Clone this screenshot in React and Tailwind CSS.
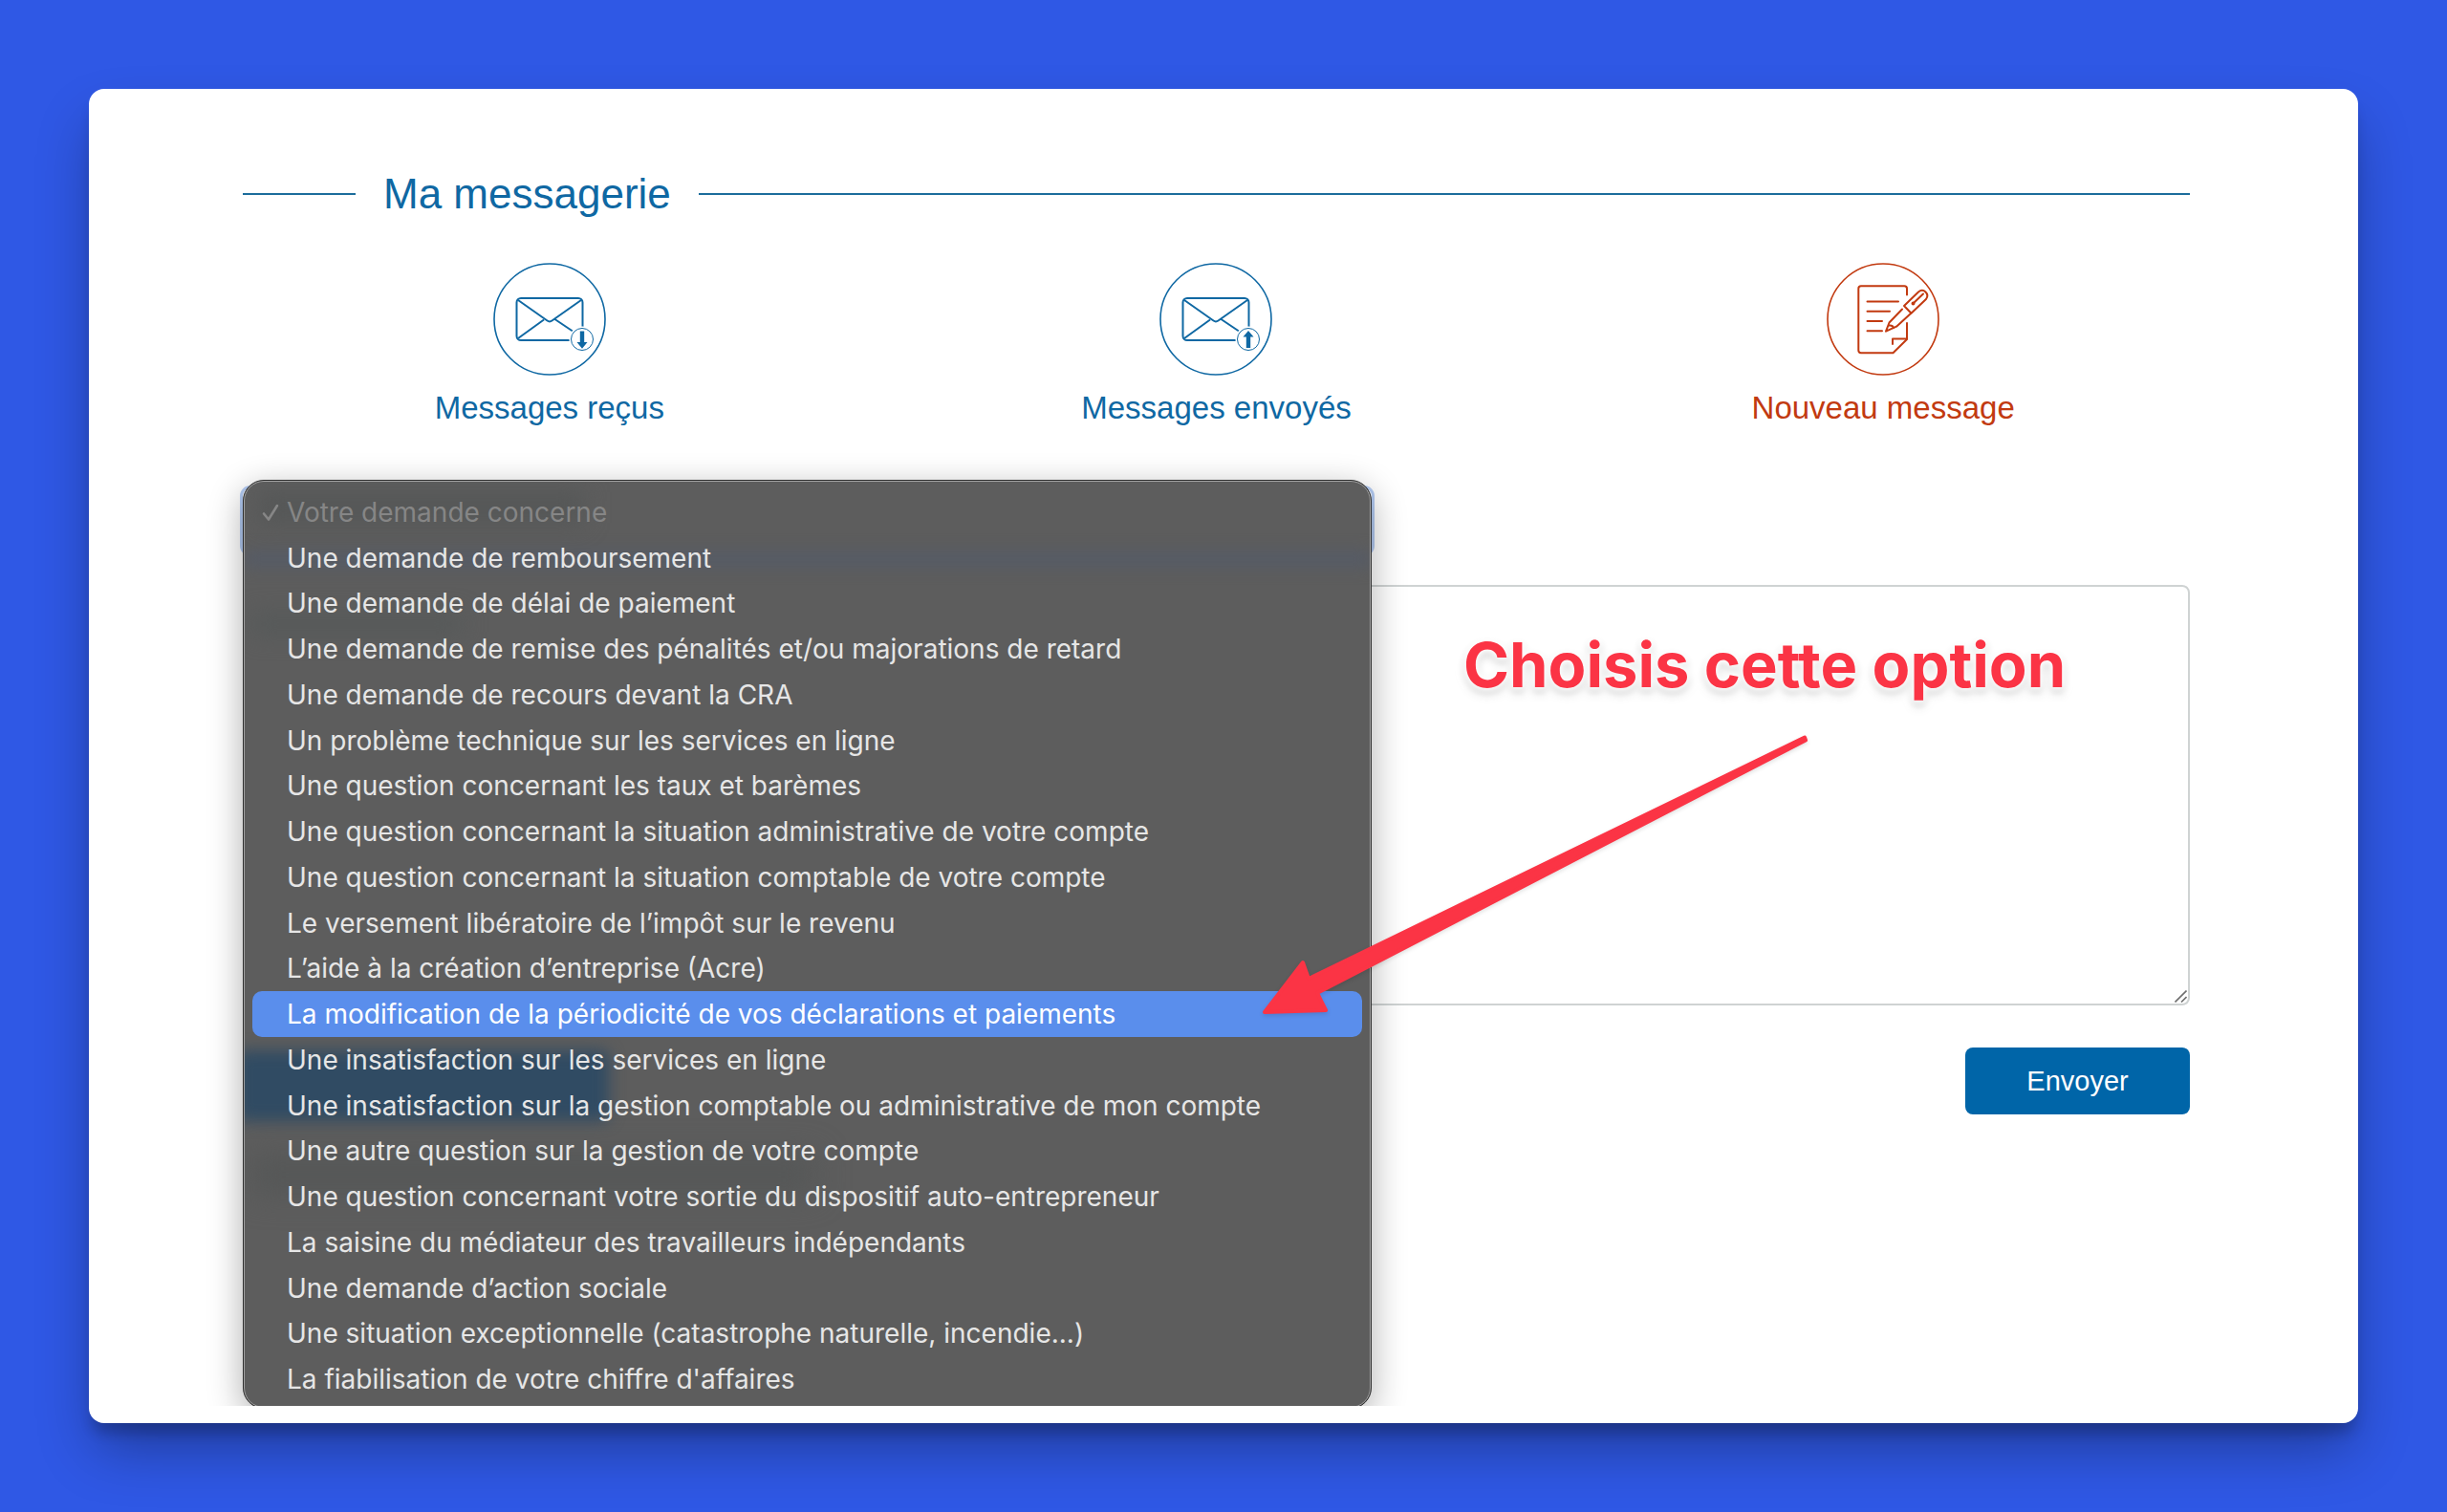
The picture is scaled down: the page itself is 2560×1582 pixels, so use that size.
const options = [
  "Votre demande concerne",
  "Une demande de remboursement",
  "Une demande de délai de paiement",
  "Une demande de remise des pénalités et/ou majorations de retard",
  "Une demande de recours devant la CRA",
  "Un problème technique sur les services en ligne",
  "Une question concernant les taux et barèmes",
  "Une question concernant la situation administrative de votre compte",
  "Une question concernant la situation comptable de votre compte",
  "Le versement libératoire de l’impôt sur le revenu",
  "L’aide à la création d’entreprise (Acre)",
  "La modification de la périodicité de vos déclarations et paiements",
  "Une insatisfaction sur les services en ligne",
  "Une insatisfaction sur la gestion comptable ou administrative de mon compte",
  "Une autre question sur la gestion de votre compte",
  "Une question concernant votre sortie du dispositif auto-entrepreneur",
  "La saisine du médiateur des travailleurs indépendants",
  "Une demande d’action sociale",
  "Une situation exceptionnelle (catastrophe naturelle, incendie...)",
  "La fiabilisation de votre chiffre d'affaires",
];

const HIGHLIGHTED = 11;

const EnvelopeIcon = ({ direction }) => (
  <svg className="w-[118px] h-[118px]" fill="none" stroke="currentColor" viewBox="0 0 118 118">
    <circle cx="59" cy="59" r="58" strokeWidth={1.6} />
    <rect x="24.5" y="37" width="69" height="44" rx="4.5" strokeWidth={2} />
    <path strokeWidth={2} d="M26 39L56.500 60.500q2.500 1.800 5 0L92 39M26 79l27-19.500M64.500 59L92 77.500" />
    <circle cx="93" cy="80" r="13.500" fill="white" stroke="none" />
    <circle cx="93" cy="80" r="11.500" strokeWidth={1} />
    {direction === "down" ? (
      <path fill="currentColor" stroke="none" d="M90.800 71.500h4.400V83h3.300L93 89.700 87.500 83h3.300z" />
    ) : (
      <path fill="currentColor" stroke="none" d="M90.800 89h4.400V77.500h3.300L93 71l-5.500 6.500h3.300z" />
    )}
  </svg>
);

const ComposeIcon = () => (
  <svg
    className="w-[118px] h-[118px]"
    fill="none"
    stroke="currentColor"
    strokeLinecap="round"
    strokeLinejoin="round"
    viewBox="0 0 118 118"
  >
    <circle cx="59" cy="59" r="58" strokeWidth={1.6} />
    <g strokeWidth={2}>
      <path d="M84 33.500V27q0-2.700-2.700-2.700H36q-2.700 0-2.700 2.700v64.600q0 2.700 2.700 2.700H69.500L84 80V63" />
      <path d="M69 85v-5.500h14.500" />
      <path d="M42.500 40.500h32.500M42.500 50.800h23.500M42.500 61h15.500M42.500 71.300h15.500" />
      <path d="M79 48.500L65.500 62.500 62 71.700l11-5L88 53" />
      <path d="M65.500 65.500q3.500-.5 4.500 2.500" />
      <path d="M81 45l15-14.500q4-3.500 7.500 0t.5 7.500L88.500 52.700z" />
      <path d="M90.500 42.500L101 32.500" />
      <circle cx="90.500" cy="42.500" r="1" />
    </g>
  </svg>
);

const tabs = [
  { label: "Messages reçus", icon: <EnvelopeIcon direction="down" />, color: "text-[#0f68a3]" },
  { label: "Messages envoyés", icon: <EnvelopeIcon direction="up" />, color: "text-[#0f68a3]" },
  { label: "Nouveau message", icon: <ComposeIcon />, color: "text-[#c23a10]" },
];

const SubjectMenu = () => (
  <div className="absolute left-0 -top-[9px] z-10 w-full overflow-hidden rounded-[22px] border border-[#2e2e2e] bg-[#5d5d5d] px-[9px] pt-[9px] pb-[6px] shadow-[0_10px_36px_rgba(0,0,0,0.32)]">
    {/* Page colours showing through the translucent menu */}
    <div className="absolute left-4 top-3 h-8 w-[340px] bg-[#555757] blur-md" />
    <div className="absolute left-0 top-[74px] h-4 w-full bg-[#555b67] blur-sm" />
    <div className="absolute left-2 top-[140px] h-5 w-[220px] bg-[#555959] blur-md" />
    <div className="absolute -left-2 top-[596px] h-[74px] w-[390px] rounded-lg bg-[#304b63] blur-sm" />
    <div className="absolute left-2 top-[706px] h-10 w-[590px] bg-[#555757] blur-lg" />
    <div className="absolute inset-0 rounded-[21px] border border-[#a3a3a3]" />

    <ul role="listbox" aria-label="Votre demande concerne" className="relative flex h-[955px] flex-col">
      {options.map((option, index) => (
        <li
          key={option}
          role="option"
          aria-selected={index === 0}
          className={`relative flex flex-1 items-center rounded-[10px] pl-9 font-[Inter,sans-serif] text-[28px] leading-none whitespace-nowrap ${
            index === HIGHLIGHTED
              ? "bg-[#5a8eec] text-white"
              : index === 0
                ? "text-[#868686]"
                : "text-[#e6e6e6]"
          }`}
        >
          {index === 0 && (
            <svg
              className="absolute left-2 h-6 w-6"
              fill="none"
              stroke="currentColor"
              strokeWidth={2.6}
              strokeLinecap="round"
              strokeLinejoin="round"
              viewBox="0 0 24 24"
            >
              <path d="M4 13.500l5 6L18 5" />
            </svg>
          )}
          {option}
        </li>
      ))}
    </ul>
  </div>
);

const App = () => {
  return (
    <div className="flex min-h-screen bg-[#2f58e5] p-[93px] font-['Liberation_Sans',Arial,sans-serif]">
      <main className="flex flex-1 flex-col rounded-2xl bg-white pb-[18px] shadow-[0_32px_60px_-6px_rgba(0,0,0,0.32),0_14px_14px_-4px_rgba(0,0,0,0.2)]">
        <div className="flex-1 overflow-hidden pt-[85px] pl-[161px] pr-[176px]">
          {/* Title */}
          <div className="flex items-center gap-[29px]">
            <div className="h-[2px] w-[118px] bg-[#1c6d9c]" />
            <h1 className="text-[44px] leading-[50px] text-[#0f68a3]">Ma messagerie</h1>
            <div className="h-[2px] flex-1 bg-[#1c6d9c]" />
          </div>

          {/* Mailbox tabs */}
          <nav className="-mx-7 mt-[47px] grid grid-cols-3">
            {tabs.map((tab) => (
              <a
                key={tab.label}
                href="#"
                className={`flex flex-col items-center gap-[14px] text-[33px] leading-10 ${tab.color}`}
              >
                {tab.icon}
                {tab.label}
              </a>
            ))}
          </nav>

          {/* New message form */}
          <form className="mt-16">
            <div className="relative w-[58%]">
              <select
                aria-label="Votre demande concerne"
                className="block h-[68px] w-full appearance-none rounded-lg bg-white px-6 text-[29px] text-white outline-3 outline-[#b3cbf3]"
              >
                {options.map((option) => (
                  <option key={option}>{option}</option>
                ))}
              </select>
              <SubjectMenu />
            </div>

            <div className="relative mt-[33px]">
              <textarea
                aria-label="Votre message"
                className="block h-[440px] w-full resize-none rounded-lg border-2 border-[#cfd3d3] bg-white p-6 text-[29px]"
              />
              <svg
                className="absolute right-[3px] bottom-[3px] h-[13px] w-[13px]"
                stroke="#6f6f6f"
                strokeWidth={1.6}
                viewBox="0 0 13 13"
              >
                <path d="M.5 12.500l12-12M7 12.500l5.500-5.500" />
              </svg>

              {/* Annotation */}
              <p className="absolute top-11 left-[1277px] z-20 font-[Inter,sans-serif] text-[65px] leading-[80px] font-bold whitespace-nowrap text-[#fb3445] [filter:drop-shadow(0_0_3px_white)_drop-shadow(0_0_3px_white)_drop-shadow(0_5px_3px_rgba(0,0,0,0.14))]">
                Choisis cette option
              </p>
              <svg
                className="absolute top-[148px] left-[1056px] z-20 h-[310px] w-[590px] [filter:drop-shadow(0_2px_2px_rgba(0,0,0,0.12))]"
                fill="#fb3445"
                stroke="#fb3445"
                strokeWidth={4}
                strokeLinejoin="round"
                viewBox="1310 760 590 310"
              >
                <path d="M1323 1059L1363 1007 1369 1024 1888 771.500 1889 774.500 1378 1039 1387 1057z" />
              </svg>
            </div>

            <div className="mt-11 flex justify-end">
              <button
                type="submit"
                className="h-[70px] w-[235px] rounded-lg bg-[#0065a8] text-[29px] leading-none text-white"
              >
                Envoyer
              </button>
            </div>
          </form>
        </div>
      </main>
    </div>
  );
};

export default App;
